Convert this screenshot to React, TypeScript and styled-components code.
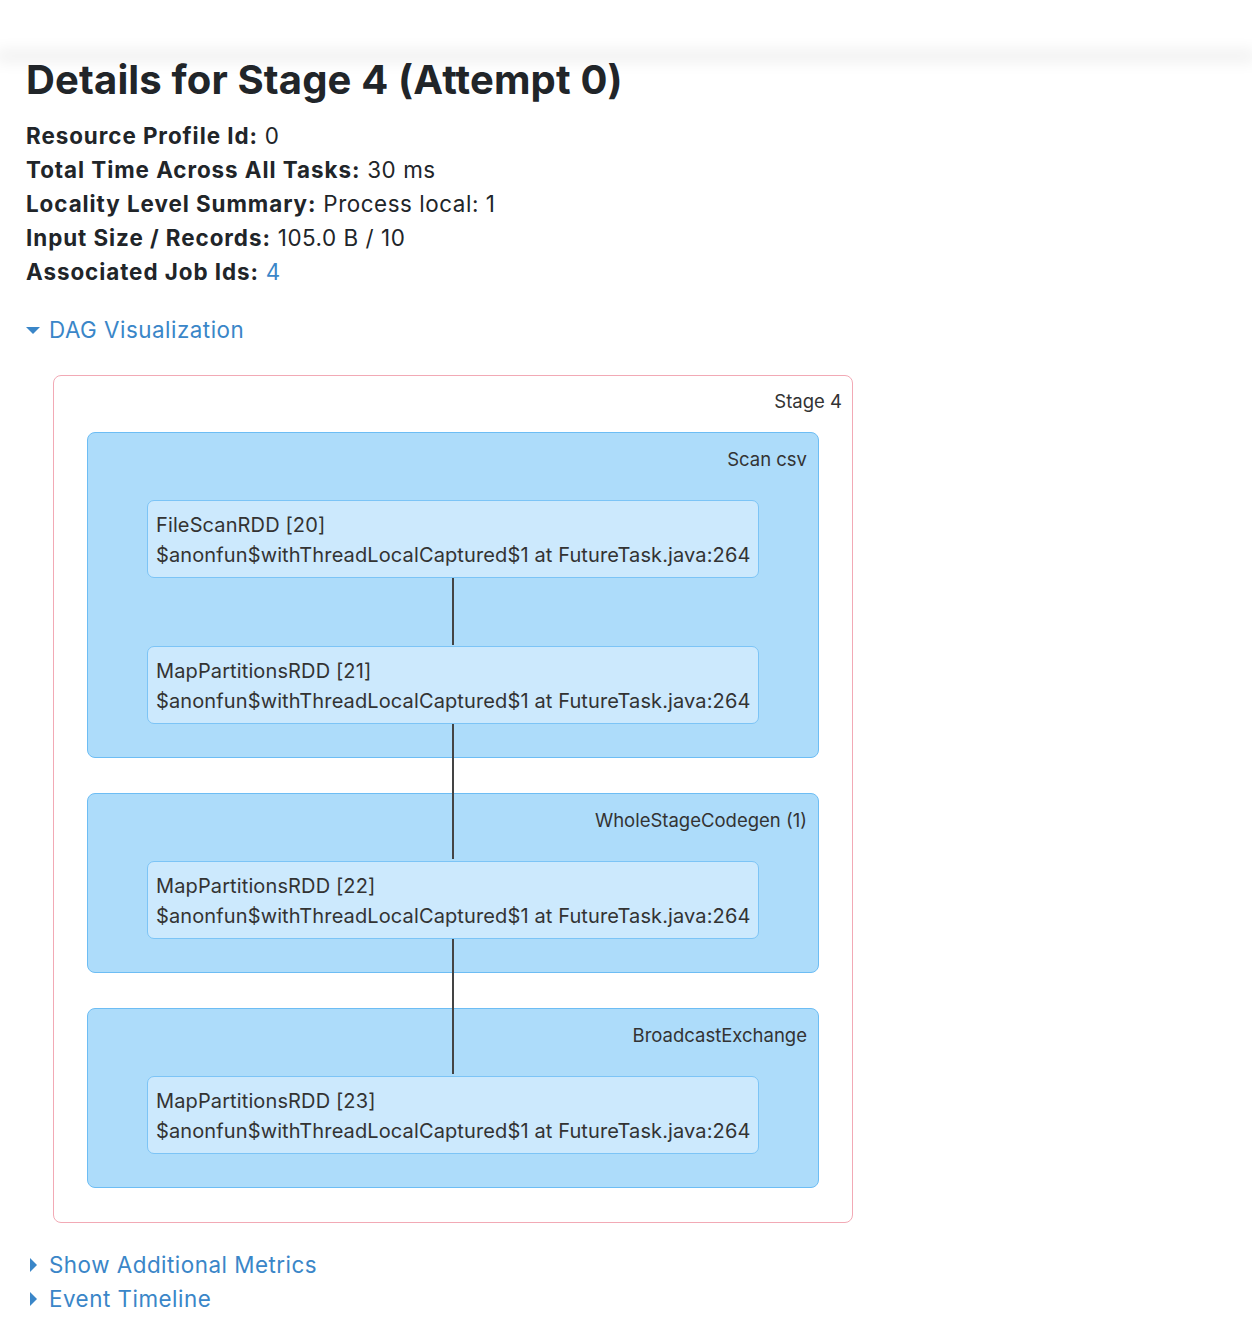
import React from "react";
import styled, { createGlobalStyle } from "styled-components";

const GlobalStyle = createGlobalStyle`
  body {
    margin: 0;
    background: #ffffff;
    font-family: Inter, "Noto Sans", sans-serif;
    color: #212529;
  }
`;

const TopShadow = styled.div`
  height: 0;
  box-shadow: 0 0 16px 4px rgba(0, 0, 0, 0.1);
`;

const Page = styled.div`
  padding: 0 26px 20px;
`;

const Title = styled.h3`
  margin: 56px 0 15px;
  font-size: 40px;
  line-height: 48px;
  font-weight: 700;
  letter-spacing: 0.15px;
`;

const InfoList = styled.ul`
  list-style: none;
  margin: 0;
  padding: 0;
`;

const InfoItem = styled.li`
  font-size: 22.4px;
  line-height: 34px;
  letter-spacing: 0.55px;

  > strong {
    font-weight: 700;
    letter-spacing: 0.95px;
  }
`;

const Link = styled.a`
  color: #3a86c8;
  text-decoration: none;
`;

const Toggle = styled.div<{ $top: number }>`
  display: flex;
  align-items: center;
  margin-top: ${(p) => p.$top}px;
  font-size: 22.4px;
  line-height: 34px;
  letter-spacing: 0.5px;
  color: #3a86c8;
  cursor: pointer;
`;

const ArrowOpen = styled.span`
  width: 0;
  height: 0;
  margin-right: 9px;
  border-left: 7px solid transparent;
  border-right: 7px solid transparent;
  border-top: 7px solid #3a86c8;
`;

const ArrowClosed = styled.span`
  width: 0;
  height: 0;
  margin: 0 12px 0 4px;
  border-top: 7px solid transparent;
  border-bottom: 7px solid transparent;
  border-left: 7px solid #3a86c8;
`;

const StageBox = styled.div`
  width: 798px;
  margin: 28px 0 0 27px;
  padding: 12px 0 34px;
  border: 1px solid #f2a9b5;
  border-radius: 8px;
  display: flex;
  flex-direction: column;
  align-items: center;
`;

const BoxLabel = styled.div<{ $inset: number }>`
  align-self: stretch;
  text-align: right;
  padding-right: ${(p) => p.$inset}px;
  font-size: 18.5px;
  line-height: 26px;
  color: #333;
`;

const ClusterList = styled.div`
  display: flex;
  flex-direction: column;
  gap: 35px;
  margin-top: 18px;
`;

const Cluster = styled.div`
  width: 730px;
  padding: 13px 0 33px;
  background: #addcfa;
  border: 1px solid #6dbdf4;
  border-radius: 8px;
  display: flex;
  flex-direction: column;
  align-items: center;
`;

const NodeList = styled.div`
  display: flex;
  flex-direction: column;
  gap: 68px;
  margin-top: 28px;
`;

const Node = styled.div<{ $edge?: number }>`
  position: relative;
  box-sizing: border-box;
  width: 612px;
  padding: 9px 8px 7px;
  background: #cce9fd;
  border: 1px solid #7cc4f6;
  border-radius: 7px;
  font-size: 20px;
  line-height: 30px;
  letter-spacing: 0.12px;
  color: #333;
  white-space: nowrap;

  &::after {
    content: "";
    display: ${(p) => (p.$edge ? "block" : "none")};
    position: absolute;
    left: 304px;
    top: 100%;
    width: 2px;
    height: ${(p) => p.$edge ?? 0}px;
    margin-top: 1px;
    background: #444;
    z-index: 1;
  }
`;

type RddNode = { name: string; edge?: number };
type ClusterData = { label: string; nodes: RddNode[] };

const callSite = "$anonfun$withThreadLocalCaptured$1 at FutureTask.java:264";

const clusters: ClusterData[] = [
  {
    label: "Scan csv",
    nodes: [
      { name: "FileScanRDD [20]", edge: 67 },
      { name: "MapPartitionsRDD [21]", edge: 135 },
    ],
  },
  {
    label: "WholeStageCodegen (1)",
    nodes: [{ name: "MapPartitionsRDD [22]", edge: 135 }],
  },
  {
    label: "BroadcastExchange",
    nodes: [{ name: "MapPartitionsRDD [23]" }],
  },
];

const info: [string, React.ReactNode][] = [
  ["Resource Profile Id:", "0"],
  ["Total Time Across All Tasks:", "30 ms"],
  ["Locality Level Summary:", "Process local: 1"],
  ["Input Size / Records:", "105.0 B / 10"],
  ["Associated Job Ids:", <Link href="#">4</Link>],
];

export default function App() {
  return (
    <>
      <GlobalStyle />
      <TopShadow />
      <Page>
        <Title>Details for Stage 4 (Attempt 0)</Title>
        <InfoList>
          {info.map(([label, value]) => (
            <InfoItem key={label}>
              <strong>{label}</strong> {value}
            </InfoItem>
          ))}
        </InfoList>

        <Toggle $top={24}>
          <ArrowOpen />
          DAG Visualization
        </Toggle>

        <StageBox>
          <BoxLabel $inset={10}>Stage 4</BoxLabel>
          <ClusterList>
            {clusters.map((c) => (
              <Cluster key={c.label}>
                <BoxLabel $inset={11}>{c.label}</BoxLabel>
                <NodeList>
                  {c.nodes.map((n) => (
                    <Node key={n.name} $edge={n.edge}>
                      {n.name}
                      <br />
                      {callSite}
                    </Node>
                  ))}
                </NodeList>
              </Cluster>
            ))}
          </ClusterList>
        </StageBox>

        <Toggle $top={25}>
          <ArrowClosed />
          Show Additional Metrics
        </Toggle>
        <Toggle $top={0}>
          <ArrowClosed />
          Event Timeline
        </Toggle>
      </Page>
    </>
  );
}
